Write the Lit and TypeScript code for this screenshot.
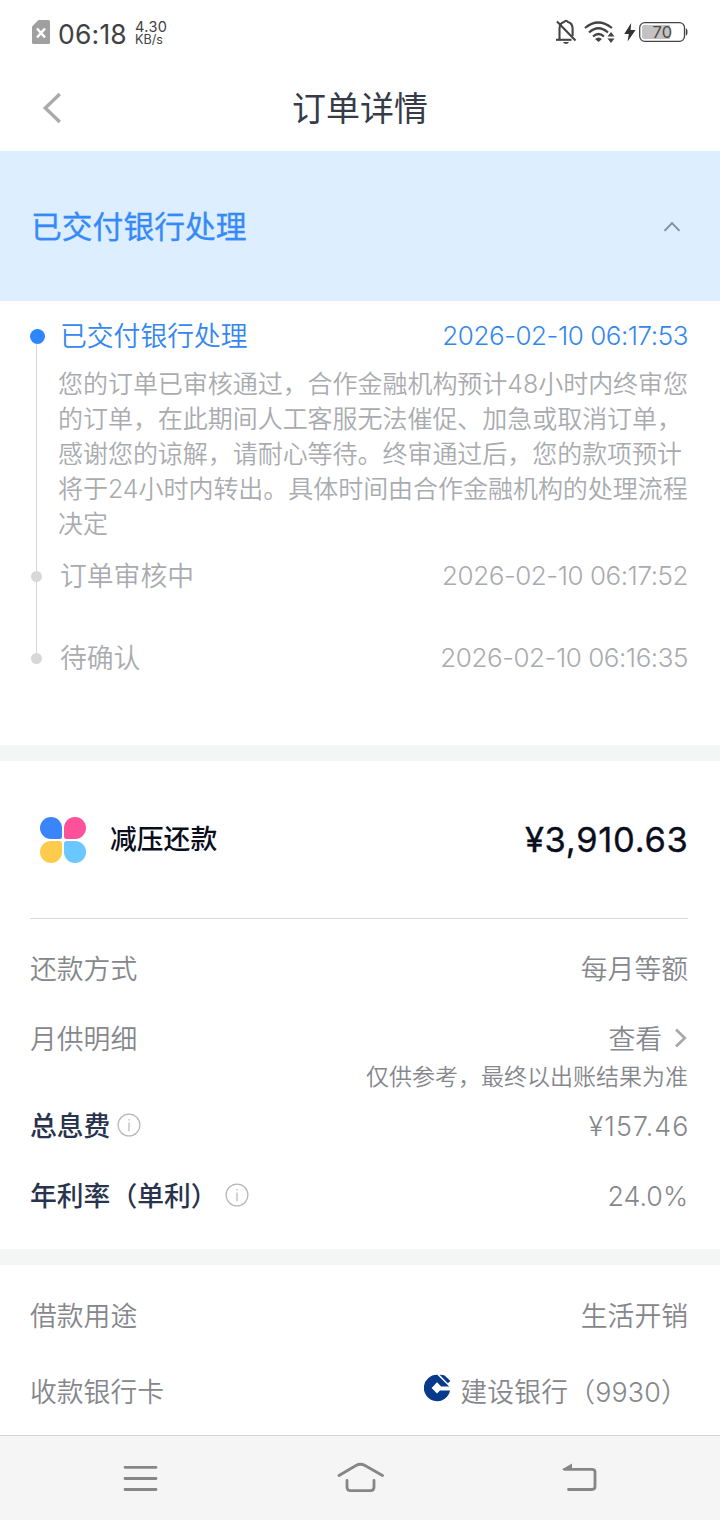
import { LitElement, html, css } from "lit";
import { customElement, property } from "lit/decorators.js";

@customElement("info-icon")
class InfoIcon extends LitElement {
  static styles = css`:host { display: block; width: 24px; height: 24px; } .icon { display: block; }`;
  render() {
    return html`<svg class="icon" width="24" height="24" viewBox="0 0 24 24" fill="none" stroke="#b4b6ba" stroke-width="1.2">
      <circle cx="12" cy="12" r="10.9" />
      <path d="M12 9.4V18.2" /><path d="M12 6V7.6" />
    </svg>`;
  }
}

@customElement("status-bar")
class StatusBar extends LitElement {
  static styles = css`
    :host { display: flex; height: 65px; box-sizing: border-box; padding: 0 31px 0 32px; justify-content: space-between; align-items: flex-start; color: #414141; }
    .left, .right { display: flex; align-items: flex-start; }
    .icon { display: block; flex: none; }
    .sim { margin-top: 20px; }
    .time { margin: 18px 0 0 8px; font-size: 26.5px; line-height: 32px; width: 69px; white-space: nowrap; letter-spacing: 0.2px; }
    .speed { margin: 20px 0 0 8px; font-size: 14.5px; line-height: 13px; white-space: nowrap; }
    .unit { font-size: 12.6px; }
    .rate { letter-spacing: 0.4px; }
    .right { margin-top: 18px; }
    .wifi { margin-left: 7px; }
    .bolt { margin-left: 8px; }
    .battery { margin-left: 3px; }
    .level { font-family: Inter, sans-serif; font-size: 16.5px; fill: #4a4a4a; }
  `;
  render() {
    return html`
      <div class="left">
        <svg class="icon sim" width="18" height="24" viewBox="0 0 18 24">
          <path d="M6.5 0H16.5Q18 0 18 1.5V22.5Q18 24 16.5 24H1.5Q0 24 0 22.5V6.5Z" fill="#a0a0a0" />
          <path d="M5 8.5L13 17.5M13 8.5L5 17.5" stroke="#fff" stroke-width="2.5" />
        </svg>
        <div class="time">06:18</div>
        <div class="speed"><div class="rate">4.30</div><div class="unit">KB/s</div></div>
      </div>
      <div class="right">
        <svg class="icon" width="22" height="28" viewBox="0 0 22 28" fill="none" stroke="#444" stroke-width="2.1">
          <path d="M4.5 21V11Q4.5 5 9 4Q11 1.5 13 4Q17.6 5 17.6 11V18" />
          <path d="M1 21.8H16.5" />
          <path d="M2 3.5L20.5 22.5" />
          <path d="M8 24H14Q13 26 11 26Q9 26 8 24Z" fill="#444" stroke="none" />
        </svg>
        <svg class="icon wifi" width="32" height="28" viewBox="0 0 32 28" fill="none" stroke="#444" stroke-width="2.2">
          <path d="M1 10Q14 -1 28 10" />
          <path d="M5 14.5Q14.5 6 24 14.5" />
          <path d="M9 18.5Q14.5 13.5 20 18.5" />
          <path d="M11 21Q14.5 18 18 21L14.5 24Z" fill="#444" stroke="none" />
          <path d="M23.5 18.5L27 14L30.5 18.5ZM23.5 20.5L27 25L30.5 20.5Z" fill="#444" stroke="none" />
        </svg>
        <svg class="icon bolt" width="12" height="28" viewBox="0 0 12 28">
          <path d="M7.2 5L0.2 16H4.8L3.6 23.5L11.6 12H6.6Z" fill="#333" />
        </svg>
        <svg class="icon battery" width="50" height="28" viewBox="0 0 50 28">
          <rect x="0.7" y="4.7" width="44.8" height="18.6" rx="5" fill="#fff" stroke="#444" stroke-width="1.3" />
          <path d="M5 7H31V21H5Q3 21 3 19V9Q3 7 5 7Z" fill="#c2c2c2" />
          <path d="M46.8 10.5Q48.5 10.5 48.5 14Q48.5 17.5 46.8 17.5Z" fill="#444" />
          <text class="level" x="23.3" y="20" text-anchor="middle">70</text>
        </svg>
      </div>
    `;
  }
}

@customElement("nav-bar")
class NavBar extends LitElement {
  static styles = css`
    :host { display: flex; box-sizing: border-box; height: 85px; border-top: 1px solid #d6d8d7; background: #f5f5f5; justify-content: space-between; align-items: flex-start; padding: 23px 120px 0 120px; }
    .icon { display: block; }
  `;
  render() {
    return html`
      <svg class="icon" width="40" height="38" viewBox="0 0 40 38" stroke="#868686" stroke-width="2.8" stroke-linecap="round">
        <path d="M5 8.3H36M5 19.5H36M5 30.5H36" />
      </svg>
      <svg class="icon" width="48" height="38" viewBox="0 0 48 38" fill="none" stroke="#868686" stroke-width="2.8" stroke-linecap="round" stroke-linejoin="round">
        <path d="M3 16.5L20 6.5Q24.5 4 29 6.5L46.5 16.5" />
        <path d="M11 21.5V28Q11 31.7 14.5 31.7H34.5Q38 31.7 38 28V21.5" />
      </svg>
      <svg class="icon" width="40" height="38" viewBox="0 0 40 38" fill="none" stroke="#868686" stroke-width="2.8" stroke-linecap="round">
        <path d="M4.5 10.3H32Q35 10.3 35 13V27.5Q35 30.5 32 30.5H8.5" />
        <path d="M1.8 10.4L12 4.6V10.5Z" fill="#868686" stroke="none" />
      </svg>
    `;
  }
}

interface Step { title: string; time: string; active?: boolean; detail?: string[]; }

@customElement("step-item")
class StepItem extends LitElement {
  @property({ attribute: false }) step!: Step;
  @property({ type: Number }) index = 0;
  @property({ type: Boolean }) last = false;
  static styles = css`
    .item { display: flex; min-height: 82px; color: #a9abaf; }
    .rail { flex: none; width: 15px; margin-left: 30px; display: flex; flex-direction: column; align-items: flex-start; }
    .line { width: 1px; margin-left: 6px; background: #d8d8d8; }
    .lead { height: 13px; }
    .blank { height: 11px; }
    .rest { flex: 1; }
    .dot { width: 11px; height: 11px; margin-left: 1px; border-radius: 50%; background: #d8d8d8; }
    .dot.on { width: 15px; height: 15px; margin-left: 0; background: #2e86fb; }
    .main { flex: 1; padding: 0 32px 0 15px; }
    .head { display: flex; justify-content: space-between; height: 36px; line-height: 37px; font-size: 26.8px; }
    .active { color: #3487f0; }
    .when { line-height: 35px; font-size: 26px; letter-spacing: -0.45px; font-weight: 300; }
    .detail { margin: 13px -20px 0 -2px; padding-bottom: 16px; font-size: 25px; letter-spacing: -0.04px; line-height: 35px; white-space: nowrap; }
    .row { height: 35px; }
  `;
  render() {
    const s = this.step;
    return html`<div class="item">
      <div class="rail">
        ${this.index ? html`<div class="line lead"></div>` : html`<div class="blank"></div>`}
        <div class="dot ${s.active ? "on" : ""}"></div>
        ${this.last ? "" : html`<div class="line rest"></div>`}
      </div>
      <div class="main">
        <div class="head ${s.active ? "active" : ""}"><span>${s.title}</span><span class="when">${s.time}</span></div>
        ${s.detail ? html`<div class="detail">${s.detail.map((d) => html`<div class="row">${d}</div>`)}</div>` : ""}
      </div>
    </div>`;
  }
}

@customElement("app-root")
class AppRoot extends LitElement {
  static styles = css`
    :host { display: flex; flex-direction: column; width: 720px; height: 1520px; overflow: hidden; background: #fff; font-family: Inter, "Noto Sans CJK SC", sans-serif; font-weight: 350; font-size: 26.8px; color: #85878c; }
    status-bar { font-weight: 400; flex: none; }
    .icon { display: block; flex: none; }
    .header { display: grid; grid-template-columns: 80px 1fr 80px; align-items: center; height: 86px; flex: none; }
    .back { margin-left: 41px; }
    .title { text-align: center; font-size: 34px; line-height: 40px; padding-top: 1px; font-weight: 400; color: #363b49; }
    .banner { display: flex; align-items: center; justify-content: space-between; height: 150px; box-sizing: border-box; padding: 0 39px 0 31px; background: #dceeff; flex: none; }
    .state { font-size: 30.8px; line-height: 40px; padding-top: 1px; font-weight: 400; color: #358af8; -webkit-text-stroke: 0.3px #358af8; }
    .steps { height: 444px; box-sizing: border-box; padding-top: 17px; flex: none; }
    .gap { height: 16px; background: #f4f5f5; flex: none; }
    .product { display: flex; align-items: center; height: 157px; margin: 0 32px 0 30px; border-bottom: 1px solid #d9dadb; flex: none; }
    .logo { margin-left: 9px; }
    .name { margin: -1px 0 0 23px; line-height: 36px; font-weight: 500; color: #0a0e1c; flex: 1; }
    .amount { font-size: 34.5px; font-weight: 400; letter-spacing: 0.7px; margin-right: -0.5px; color: #0a0e1c; -webkit-text-stroke: 0.35px #0a0e1c; }
    .rows { padding: 0 32px 0 30px; flex: none; }
    .terms { height: 330px; box-sizing: border-box; padding-top: 15px; }
    .funds { flex: 1; }
    .row { display: flex; align-items: center; justify-content: space-between; line-height: 36px; height: 70px; }
    .view { height: 69px; }
    .side { display: flex; align-items: center; }
    .arrow { margin: -1px 0 0 12px; }
    .note { text-align: right; font-size: 23px; line-height: 30px; height: 18px; margin: -11px 0 0; }
    .strong { color: #29334d; font-weight: 500; }
    .info { margin: -3px 0 0 7px; }
    .fee { margin-top: 11px; }
    .interest { letter-spacing: 1.1px; margin-right: -1.5px; }
    .bank { margin: -8px 8px 0 0; }
    .account { letter-spacing: 0.2px; }
    .use { height: 101px; }
    .card { height: 52px; }
  `;

  private steps: Step[] = [
    {
      title: "已交付银行处理", time: "2026-02-10 06:17:53", active: true,
      detail: [
        "您的订单已审核通过，合作金融机构预计48小时内终审您",
        "的订单，在此期间人工客服无法催促、加急或取消订单，",
        "感谢您的谅解，请耐心等待。终审通过后，您的款项预计",
        "将于24小时内转出。具体时间由合作金融机构的处理流程",
        "决定",
      ],
    },
    { title: "订单审核中", time: "2026-02-10 06:17:52" },
    { title: "待确认", time: "2026-02-10 06:16:35" },
  ];

  render() {
    return html`
      <status-bar></status-bar>
      <div class="header">
        <svg class="icon back" width="20" height="32" viewBox="0 0 20 32" fill="none" stroke="#a8aaad" stroke-width="3.4"><path d="M18.8 2L4.3 16L18.8 30" /></svg>
        <div class="title">订单详情</div>
      </div>
      <div class="banner">
        <div class="state">已交付银行处理</div>
        <svg class="icon" width="18" height="12" viewBox="0 0 18 12" fill="none" stroke="#858f9b" stroke-width="1.9"><path d="M1.5 10.8L9 3.1L16.5 10.8" /></svg>
      </div>
      <div class="steps">
        ${this.steps.map((s, i) => html`<step-item .step=${s} .index=${i} .last=${i === this.steps.length - 1}></step-item>`)}
      </div>
      <div class="gap"></div>
      <div class="product">
        <svg class="icon logo" width="48" height="48" viewBox="0 0 48 48">
          <path d="M12 1A11 11 0 0 1 23 12V20.5Q23 23 20.5 23H12A11 11 0 0 1 12 1Z" fill="#3a85fb" />
          <path d="M36 1A11 11 0 0 1 36 23H27.5Q25 23 25 20.5V12A11 11 0 0 1 36 1Z" fill="#fd5299" />
          <path d="M12 25H20.5Q23 25 23 27.5V36A11 11 0 1 1 12 25Z" fill="#fecb4c" />
          <path d="M27.5 25H36A11 11 0 1 1 25 36V27.5Q25 25 27.5 25Z" fill="#6ac7ff" />
        </svg>
        <div class="name">减压还款</div>
        <div class="amount">¥3,910.63</div>
      </div>
      <div class="rows terms">
        <div class="row"><span>还款方式</span><span>每月等额</span></div>
        <div class="row view"><span>月供明细</span>
          <span class="side">查看
            <svg class="icon arrow" width="14" height="22" viewBox="0 0 14 22" fill="none" stroke="#a5a7ab" stroke-width="2.6"><path d="M2 2.5L10.8 11L2 19.5" /></svg>
          </span>
        </div>
        <div class="note">仅供参考，最终以出账结果为准</div>
        <div class="row fee"><span class="side strong">总息费<info-icon class="info"></info-icon></span><span class="interest">¥157.46</span></div>
        <div class="row"><span class="side strong">年利率（单利）<info-icon class="info"></info-icon></span><span>24.0%</span></div>
      </div>
      <div class="gap"></div>
      <div class="rows funds">
        <div class="row use"><span>借款用途</span><span>生活开销</span></div>
        <div class="row card"><span>收款银行卡</span>
          <span class="side">
            <svg class="icon bank" width="28" height="28" viewBox="0 0 28 28">
              <path d="M13.3 0.8A13.2 13.2 0 1 0 26 16.4H16L13 19.6L7.6 13.9L13 8.2L17.2 12.6H25.2Z" fill="#073a8c" />
              <path d="M15.6 0.8Q18.5 0.6 20.6 1.6L26.4 7L23.8 9.3Z" fill="#073a8c" />
            </svg><span class="account">建设银行（9930）</span>
          </span>
        </div>
      </div>
      <nav-bar></nav-bar>
    `;
  }
}
